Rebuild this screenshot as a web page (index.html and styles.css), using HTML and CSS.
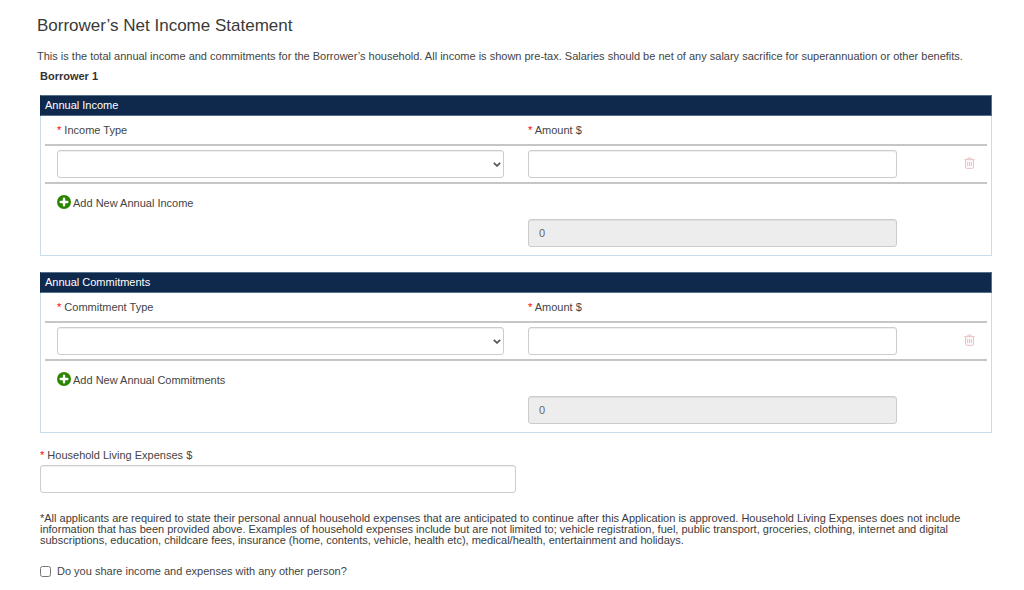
FILE: index.html
```html
<!DOCTYPE html>
<html lang="en">
<head>
<meta charset="utf-8">
<meta name="viewport" content="width=device-width, initial-scale=1">
<title>Borrower’s Net Income Statement</title>
<link rel="stylesheet" href="styles.css">
</head>
<body>
<svg class="sprite" aria-hidden="true">
  <symbol id="plus" viewBox="0 0 14 14">
    <circle cx="7" cy="7" r="7" fill="#2c8500"/>
    <path d="M7 3.7v6.6M3.7 7h6.6" stroke="#fff" stroke-width="2.4" stroke-linecap="round"/>
  </symbol>
  <symbol id="trash" viewBox="0 0 11 12">
    <path d="M.3 2.7h10.4M3.4 2.5l.7-1.5h2.8l.7 1.5M1.6 3v7.4q0 .9.9.9h6q.9 0 .9-.9V3M3.7 4.8v4.4M5.5 4.8v4.4M7.3 4.8v4.4" fill="none" stroke="#e6bfc0" stroke-width="1"/>
  </symbol>
  <symbol id="chevron" viewBox="0 0 8 5">
    <path d="M.8.8 4 3.9 7.2.8" fill="none" stroke="#555" stroke-width="1.7"/>
  </symbol>
</svg>
<form class="page">
  <header class="intro">
    <h1 class="title">Borrower’s Net Income Statement</h1>
    <p class="lead">This is the total annual income and commitments for the Borrower’s household. All income is shown pre-tax. Salaries should be net of any salary sacrifice for superannuation or other benefits.</p>
  </header>
  <main class="content">
    <h2 class="borrower">Borrower 1</h2>

    <section class="panel">
      <h3 class="panel-title">Annual Income</h3>
      <div class="panel-body">
        <div class="row labels">
          <label for="income-type"><span class="req">*</span> Income Type</label>
          <label for="income-amount"><span class="req">*</span> Amount $</label>
        </div>
        <div class="row entry">
          <div class="picker"><select id="income-type" class="field select"><option></option></select><svg class="chevron"><use href="#chevron"/></svg></div>
          <input id="income-amount" class="field" type="text">
          <button type="button" class="delete" aria-label="Delete income"><svg class="trash"><use href="#trash"/></svg></button>
        </div>
        <div class="add-line"><button type="button" class="add"><svg class="plus"><use href="#plus"/></svg>Add New Annual Income</button></div>
        <div class="row"><input class="field total" type="text" value="0" readonly aria-label="Total annual income"></div>
      </div>
    </section>

    <section class="panel">
      <h3 class="panel-title">Annual Commitments</h3>
      <div class="panel-body">
        <div class="row labels">
          <label for="commitment-type"><span class="req">*</span> Commitment Type</label>
          <label for="commitment-amount"><span class="req">*</span> Amount $</label>
        </div>
        <div class="row entry">
          <div class="picker"><select id="commitment-type" class="field select"><option></option></select><svg class="chevron"><use href="#chevron"/></svg></div>
          <input id="commitment-amount" class="field" type="text">
          <button type="button" class="delete" aria-label="Delete commitment"><svg class="trash"><use href="#trash"/></svg></button>
        </div>
        <div class="add-line"><button type="button" class="add"><svg class="plus"><use href="#plus"/></svg>Add New Annual Commitments</button></div>
        <div class="row"><input class="field total" type="text" value="0" readonly aria-label="Total annual commitments"></div>
      </div>
    </section>

    <div class="living">
      <label for="living"><span class="req">*</span> Household Living Expenses $</label>
      <input id="living" class="field" type="text">
    </div>
    <p class="note">*All applicants are required to state their personal annual household expenses that are anticipated to continue after this Application is approved. Household Living Expenses does not include information that has been provided above. Examples of household expenses include but are not limited to; vehicle registration, fuel, public transport, groceries, clothing, internet and digital subscriptions, education, childcare fees, insurance (home, contents, vehicle, health etc), medical/health, entertainment and holidays.</p>
    <label class="share"><input class="check" type="checkbox">Do you share income and expenses with any other person?</label>
  </main>
</form>
</body>
</html>
```
FILE: styles.css
```css
* { box-sizing: border-box; }
body {
  margin: 0;
  background: #fff;
  color: #444;
  font: 11px/16px "Liberation Sans", Arial, sans-serif;
}
h1, h2, h3, p { margin: 0; }
.sprite { position: absolute; width: 0; height: 0; }
.page { padding: 16px 32px 8px 37px; }
.title { font-size: 17px; line-height: 20px; font-weight: 400; color: #3a3a3a; }
.lead { margin-top: 12px; }
.content { padding-left: 3px; }
.borrower { margin: 4px 0 11px; font-size: 11px; line-height: 16px; color: #333; }
.panel { margin-bottom: 16px; border: 1px solid #c8dcea; }
.panel-title {
  margin: -1px -1px 0;
  padding: 0 4px;
  border: 1px solid #55708a;
  border-left-color: #0f294d;
  background: #0f294d;
  color: #fff;
  font-size: 11px;
  line-height: 19px;
  font-weight: 400;
}
.panel-body { padding: 0 4px 8px; }
.row {
  display: grid;
  grid-template-columns: 447fr 369fr 54fr;
  column-gap: 24px;
  align-items: center;
  padding: 0 12px;
}
.labels { height: 28px; }
.entry { padding-top: 4px; padding-bottom: 4px; border-top: 2px solid #c6c6c6; border-bottom: 2px solid #c6c6c6; }
.req { color: #f00; }
.field {
  width: 100%;
  height: 28px;
  padding: 0 10px;
  border: 1px solid #ccc;
  border-radius: 3px;
  background: #fff;
  color: #666;
  box-shadow: inset 0 1px 1px rgba(0, 0, 0, .07);
  font: inherit;
}
.picker { position: relative; display: flex; }
.select { appearance: none; }
.chevron { position: absolute; top: 12px; right: 3px; width: 8px; height: 5px; pointer-events: none; }
.total { grid-column: 2; background: #ededed; }
.add-line { display: flex; height: 35px; padding: 8px 12px 0; align-items: flex-start; }
.add, .delete { padding: 0; border: 0; background: none; color: inherit; font: inherit; cursor: pointer; }
.add { display: flex; align-items: center; gap: 2px; line-height: 22px; }
.plus { width: 14px; height: 14px; margin-bottom: 2px; }
.delete { justify-self: end; line-height: 0; }
.trash { width: 11px; height: 12px; margin-bottom: 2px; }
.living { width: 50%; }
.living label { display: block; margin: -2px 0 2px; }
.note { margin-top: 20px; line-height: 11px; color: #3c3c3c; }
.share { display: flex; align-items: center; gap: 6px; margin-top: 17px; }
.check { width: 11px; height: 11px; margin: 0; }
```
